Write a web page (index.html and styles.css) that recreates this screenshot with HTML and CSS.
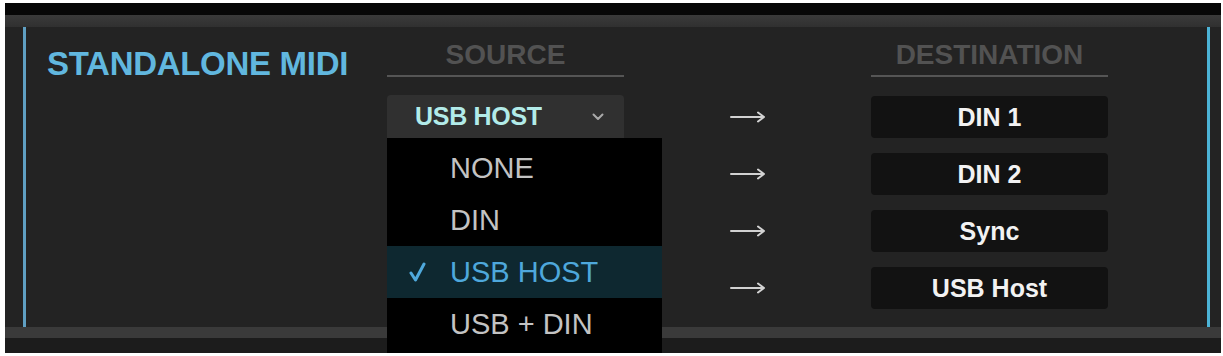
FILE: index.html
```html
<!DOCTYPE html>
<html lang="en">
<head>
<meta charset="utf-8">
<title>Standalone MIDI</title>
<link rel="stylesheet" href="styles.css">
</head>
<body>
<div class="frame">
  <div class="window">
    <div class="topbar"></div>
    <div class="toolbar"></div>
    <section class="panel">
      <h1 class="title">STANDALONE MIDI</h1>
      <div class="routing">
        <div class="hdr">SOURCE</div>
        <div></div>
        <div class="hdr">DESTINATION</div>

        <div class="source">
          <div class="select">
            <span class="select-value">USB HOST</span>
            <svg class="chevron" width="12" height="8" viewBox="0 0 12 8"><path d="M1.5 1.5 L6 6 L10.5 1.5" fill="none" stroke="#a9a9a9" stroke-width="2" stroke-linecap="round" stroke-linejoin="round"/></svg>
          </div>
          <ul class="menu">
            <li class="item">NONE</li>
            <li class="item">DIN</li>
            <li class="item selected">
              <svg class="check" width="17" height="20" viewBox="0 0 17 20"><path d="M2 11 L6.5 18 L15 2" fill="none" stroke="#4fa9dc" stroke-width="3" stroke-linecap="round" stroke-linejoin="round"/></svg>
              USB HOST
            </li>
            <li class="item">USB + DIN</li>
          </ul>
        </div>
        <div class="arrow"><svg width="36" height="14" viewBox="0 0 36 14"><path d="M1 7 H34 M28 2.5 L34 7 L28 11.5" fill="none" stroke="#d2d2d2" stroke-width="2" stroke-linecap="round" stroke-linejoin="round"/></svg></div>
        <div class="dest">DIN 1</div>

        <div></div>
        <div class="arrow"><svg width="36" height="14" viewBox="0 0 36 14"><path d="M1 7 H34 M28 2.5 L34 7 L28 11.5" fill="none" stroke="#d2d2d2" stroke-width="2" stroke-linecap="round" stroke-linejoin="round"/></svg></div>
        <div class="dest">DIN 2</div>

        <div></div>
        <div class="arrow"><svg width="36" height="14" viewBox="0 0 36 14"><path d="M1 7 H34 M28 2.5 L34 7 L28 11.5" fill="none" stroke="#d2d2d2" stroke-width="2" stroke-linecap="round" stroke-linejoin="round"/></svg></div>
        <div class="dest">Sync</div>

        <div></div>
        <div class="arrow"><svg width="36" height="14" viewBox="0 0 36 14"><path d="M1 7 H34 M28 2.5 L34 7 L28 11.5" fill="none" stroke="#d2d2d2" stroke-width="2" stroke-linecap="round" stroke-linejoin="round"/></svg></div>
        <div class="dest">USB Host</div>
      </div>
    </section>
    <div class="statusbar"></div>
    <div class="footer"></div>
  </div>
</div>
</body>
</html>
```

FILE: styles.css
```css
* { box-sizing: border-box; }
html, body { margin: 0; padding: 0; background: #ffffff; }
body { font-family: "Liberation Sans", Arial, sans-serif; }

.frame {
  width: 1223px;
  height: 356px;
  padding: 3px 2px 3px 5px;
  background: #ffffff;
}

.window {
  height: 350px;
  background: #232323;
  display: flex;
  flex-direction: column;
}

.topbar { height: 12px; background: #070707; }
.toolbar { height: 12px; background: linear-gradient(#3a3a3a, #303030); }

.panel {
  height: 300px;
  margin: 0 11px 0 18px;
  border-left: 3px solid #5f9fc2;
  border-right: 3px solid #4cb3d6;
  display: flex;
  align-items: flex-start;
}

.title {
  width: 361px;
  margin: 20px 0 0;
  padding-left: 21px;
  font-size: 33px;
  line-height: 33px;
  font-weight: bold;
  color: #61b7df;
  letter-spacing: -0.3px;
  white-space: nowrap;
}

.routing {
  margin-top: 14px;
  display: grid;
  grid-template-columns: 237px 247px 237px;
  grid-auto-rows: 42px;
  grid-template-rows: auto;
  row-gap: 15px;
}

.hdr {
  font-size: 28px;
  line-height: 28px;
  font-weight: bold;
  color: #525252;
  text-align: center;
  padding-bottom: 6px;
  border-bottom: 2px solid #555555;
  margin-bottom: 4px;
}

.source { position: relative; }

.select {
  height: 43px;
  margin-top: -1px;
  background: #303030;
  border-radius: 4px 4px 0 0;
  display: flex;
  align-items: center;
  padding-left: 28px;
  padding-right: 20px;
}
.select-value {
  flex: 1;
  font-size: 25px;
  font-weight: bold;
  color: #b2ebe9;
  letter-spacing: -0.3px;
}
.chevron { display: block; }

.menu {
  position: absolute;
  z-index: 10;
  top: 42px;
  left: 0;
  width: 275px;
  height: 215px;
  margin: 0;
  padding: 4px 0 0;
  list-style: none;
  background: #000000;
}
.item {
  height: 52px;
  display: flex;
  align-items: center;
  padding-left: 63px;
  font-size: 29px;
  color: #c3c3c3;
  position: relative;
}
.item.selected {
  background: #0e2830;
  color: #4ea8dc;
}
.check {
  position: absolute;
  left: 22px;
  top: 16px;
}

.arrow {
  display: flex;
  align-items: center;
  justify-content: center;
}
.arrow svg { display: block; }

.dest {
  background: #121212;
  border-radius: 4px;
  display: flex;
  align-items: center;
  justify-content: center;
  font-size: 25px;
  font-weight: bold;
  color: #f2f2f2;
}

.statusbar { height: 11px; background: #3a3a3a; }
.footer { height: 15px; background: #1c1c1c; }
```
